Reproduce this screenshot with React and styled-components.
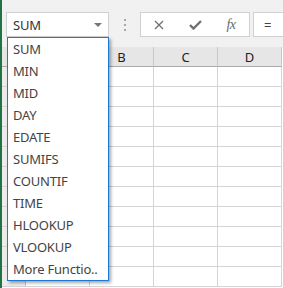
import React from "react";
import styled, { createGlobalStyle } from "styled-components";

const Global = createGlobalStyle`
  html, body { margin: 0; padding: 0; background: #fff; }
  body { font-family: "Noto Sans", "Open Sans", sans-serif; }
`;

const Root = styled.div`
  position: relative;
  width: 283px;
  height: 288px;
  overflow: hidden;
  display: flex;
  flex-direction: column;
  border-left: 2px solid #217346;
  box-sizing: border-box;
  background: #fff;
`;

const TopBar = styled.div`
  height: 47px;
  flex: none;
  box-sizing: border-box;
  background: #f1f1f1;
  display: flex;
  align-items: flex-start;
  padding: 12px 0 0 4px;
`;

const NameBox = styled.div`
  width: 103px;
  height: 25px;
  box-sizing: border-box;
  background: #fff;
  border: 1px solid #d0d0d0;
  display: flex;
  align-items: center;
  justify-content: space-between;
  padding: 0 6px 0 6px;
  font-size: 13px;
  letter-spacing: -0.2px;
  color: #333;
`;

const Arrow = styled.span`
  width: 0;
  height: 0;
  border-left: 4px solid transparent;
  border-right: 4px solid transparent;
  border-top: 4px solid #777;
  margin-top: 1px;
`;

const DotsArea = styled.div`
  width: 31px;
  height: 25px;
  display: flex;
  flex-direction: column;
  align-items: center;
  justify-content: center;
  gap: 3px;
`;

const Dot = styled.span`
  width: 2px;
  height: 2px;
  background: #a8a8a8;
`;

const ButtonsBox = styled.div`
  width: 110px;
  height: 25px;
  box-sizing: border-box;
  background: #fff;
  border: 1px solid #d0d0d0;
  display: flex;
  align-items: center;
`;

const IconSlot = styled.div`
  flex: 1;
  height: 100%;
  display: flex;
  align-items: center;
  justify-content: center;
  color: #707070;
`;

const Fx = styled.span`
  font-family: "Liberation Serif", serif;
  font-style: italic;
  font-size: 14px;
  color: #6a6a6a;
  letter-spacing: -0.5px;
`;

const FormulaBox = styled.div`
  margin-left: 3px;
  flex: 1;
  height: 25px;
  box-sizing: border-box;
  background: #fff;
  border: 1px solid #d0d0d0;
  border-right: none;
  display: flex;
  align-items: center;
  padding-left: 10px;
  font-size: 13px;
  color: #444;
`;

const Grid = styled.div`
  display: grid;
  grid-template-columns: 24px 64px 64px 64px 64px;
  grid-auto-rows: 20px;
`;

const Cell = styled.div`
  box-sizing: border-box;
  border-right: 1px solid #d4d4d4;
  border-bottom: 1px solid #d4d4d4;
  background: #fff;
`;

const HeadCell = styled.div`
  box-sizing: border-box;
  background: #e6e6e6;
  border-right: 1px solid #c8c8c8;
  border-bottom: 1px solid #ababab;
  display: flex;
  align-items: center;
  justify-content: center;
  font-size: 13px;
  color: #222;
`;

const RowHead = styled.div`
  box-sizing: border-box;
  background: #ececec;
  border-right: 1px solid #c8c8c8;
  border-bottom: 1px solid #d4d4d4;
`;

const Dropdown = styled.ul`
  position: absolute;
  left: 5px;
  top: 37px;
  width: 102px;
  height: 244px;
  margin: 0;
  padding: 0;
  list-style: none;
  box-sizing: border-box;
  background: #fff;
  border: 1px solid #1e78d6;
  box-shadow: 2px 2px 3px rgba(0, 0, 0, 0.35);
`;

const Item = styled.li`
  height: 22px;
  display: flex;
  align-items: center;
  padding-left: 5px;
  font-size: 13px;
  letter-spacing: -0.2px;
  color: #444;
  white-space: nowrap;
`;

const items = [
  "SUM",
  "MIN",
  "MID",
  "DAY",
  "EDATE",
  "SUMIFS",
  "COUNTIF",
  "TIME",
  "HLOOKUP",
  "VLOOKUP",
  "More Functio..",
];

const cols = ["", "", "B", "C", "D"];

export default function App() {
  const rows = Array.from({ length: 11 });
  return (
    <>
      <Global />
      <Root>
        <TopBar>
          <NameBox>
            <span>SUM</span>
            <Arrow />
          </NameBox>
          <DotsArea>
            <Dot />
            <Dot />
            <Dot />
          </DotsArea>
          <ButtonsBox>
            <IconSlot>
              <svg width="10" height="10" viewBox="0 0 10 10">
                <path d="M1 1 L9 9 M9 1 L1 9" stroke="#707070" strokeWidth="1.3" fill="none" />
              </svg>
            </IconSlot>
            <IconSlot>
              <svg width="13" height="10" viewBox="0 0 13 10">
                <path d="M1 5 L4.5 8.5 L12 1" stroke="#707070" strokeWidth="2.4" fill="none" />
              </svg>
            </IconSlot>
            <IconSlot>
              <Fx>fx</Fx>
            </IconSlot>
          </ButtonsBox>
          <FormulaBox>=</FormulaBox>
        </TopBar>
        <Grid>
          {cols.map((c, i) =>
            i === 0 ? <HeadCell key={i} /> : <HeadCell key={i}>{c}</HeadCell>
          )}
          {rows.map((_, r) =>
            cols.map((_, c) =>
              c === 0 ? <RowHead key={r + "-" + c} /> : <Cell key={r + "-" + c} />
            )
          )}
        </Grid>
        <Dropdown>
          {items.map((t) => (
            <Item key={t}>{t}</Item>
          ))}
        </Dropdown>
      </Root>
    </>
  );
}
